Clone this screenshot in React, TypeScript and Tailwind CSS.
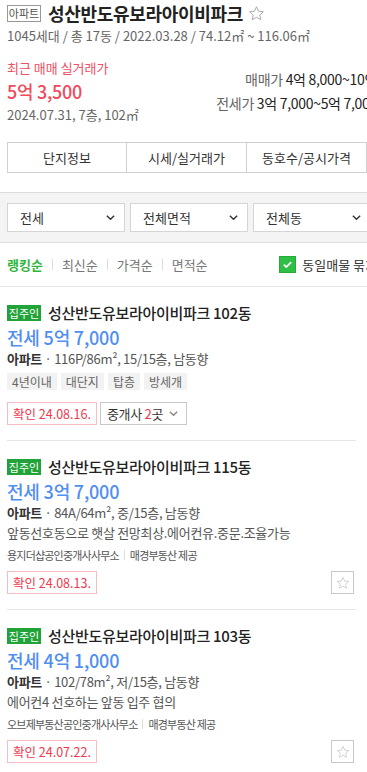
import React from 'react';

const FONT = "font-['Noto_Sans_CJK_KR',sans-serif]";

const StarIcon = ({ size, color }: { size: number; color: string }) => (
   <svg width={size} height={size} viewBox="0 0 24 24" fill="none" stroke={color} strokeWidth="1.4" strokeLinejoin="round">
      <path d="M12 2.5l2.9 6.3 6.8.7-5.1 4.6 1.5 6.8L12 17.4l-6.1 3.5 1.5-6.8-5.1-4.6 6.8-.7z" />
   </svg>
);

const Chevron = ({ size = 12, color = '#333' }: { size?: number; color?: string }) => (
   <svg width={size} height={size} viewBox="0 0 12 12" fill="none" stroke={color} strokeWidth="1.5">
      <path d="M2 4l4 4 4-4" />
   </svg>
);

interface Listing {
   dong: string;
   price: string;
   spec: string;
   tags?: string[];
   desc?: string;
   broker?: string;
   confirmed: string;
   agents?: number;
}

const listings: Listing[] = [
   {
      dong: '102동',
      price: '전세 5억 7,000',
      spec: '116P/86m², 15/15층, 남동향',
      tags: ['4년이내', '대단지', '탑층', '방세개'],
      confirmed: '24.08.16.',
      agents: 2,
   },
   {
      dong: '115동',
      price: '전세 3억 7,000',
      spec: '84A/64m², 중/15층, 남동향',
      desc: '앞동선호동으로 햇살 전망최상.에어컨유.중문.조율가능',
      broker: '용지더샵공인중개사사무소',
      confirmed: '24.08.13.',
   },
   {
      dong: '103동',
      price: '전세 4억 1,000',
      spec: '102/78m², 저/15층, 남동향',
      desc: '에어컨4 선호하는 앞동 입주 협의',
      broker: '오브제부동산공인중개사사무소',
      confirmed: '24.07.22.',
   },
];

const ListingItem: React.FC<{ item: Listing }> = ({ item }) => (
   <div className="ml-[7px] w-[349px] border-b border-[#e5e5e5] pt-[17px] pb-[15px]">
      <div className="flex items-center h-[17px]">
         <span className="h-[16px] w-[34px] bg-[#22a33a] text-white text-[11px] leading-[16px] text-center">집주인</span>
         <span className="ml-[7px] text-[15px] font-medium text-[#222] tracking-[-0.3px] leading-[17px]">
            성산반도유보라아이비파크 {item.dong}
         </span>
      </div>
      <div className="mt-[4px] leading-[24px] text-[18px] font-medium text-[#4f8ef2] tracking-[-0.2px]">{item.price}</div>
      <div className="leading-[20px] text-[13px] text-[#555] tracking-[-0.3px]">
         <span className="font-bold text-[#333]">아파트</span> · {item.spec}
      </div>
      {item.tags && (
         <div className="mt-[4px] flex gap-[4px]">
            {item.tags.map((t) => (
               <span key={t} className="h-[17px] px-[5px] bg-[#f2f2f2] text-[12px] leading-[17px] text-[#666]">
                  {t}
               </span>
            ))}
         </div>
      )}
      {item.desc && <div className="leading-[20px] text-[13px] text-[#555] tracking-[-0.3px]">{item.desc}</div>}
      {item.broker && (
         <div className="mt-[2px] flex items-center leading-[20px] text-[11px] text-[#555] tracking-[-0.8px] whitespace-nowrap">
            <span>{item.broker}</span>
            <span className="mx-[5px] h-[10px] w-px bg-[#ddd]" />
            <span>매경부동산 제공</span>
         </div>
      )}
      <div className={`${item.tags ? 'mt-[12px]' : 'mt-[6px]'} flex items-center justify-between pr-[2px]`}>
         <div className="flex gap-[3px]">
            <span className="h-[23px] px-[5px] border border-[#f8bcc3] text-[12.5px] leading-[21px] text-[#f0384e] whitespace-nowrap">
               확인 {item.confirmed}
            </span>
            {item.agents && (
               <span className="h-[23px] pl-[6px] pr-[7px] border border-[#c8c8c8] flex items-center gap-[5px] text-[13px] text-[#333] tracking-[-0.3px] whitespace-nowrap">
                  <span>
                     중개사 <span className="text-[#f0384e]">{item.agents}</span>곳
                  </span>
                  <Chevron size={11} color="#888" />
               </span>
            )}
         </div>
         {!item.agents && (
            <span className="h-[23px] w-[23px] border border-[#c8c8c8] flex items-center justify-center">
               <StarIcon size={14} color="#c8c8c8" />
            </span>
         )}
      </div>
   </div>
);

const Dropdown: React.FC<{ label: string }> = ({ label }) => (
   <div className="h-[29px] w-[118px] shrink-0 bg-white border border-[#d5d5d5] flex items-center justify-between pl-[12px] pr-[8px]">
      <span className="text-[13px] text-[#333]">{label}</span>
      <Chevron size={11} color="#333" />
   </div>
);

export default function App() {
   return (
      <div className={`w-[367px] overflow-hidden bg-white ${FONT}`}>
         <div className="w-[384px]">
            <div className="px-[7px]">
               <div className="pt-[3px] h-[23px] flex items-center">
                  <span className="h-[17px] w-[34px] border border-[#999] text-[11px] leading-[15px] text-center text-[#555]">아파트</span>
                  <span className="ml-[7px] text-[18px] font-bold text-[#222] tracking-[-0.3px] leading-[20px]">성산반도유보라아이비파크</span>
                  <span className="ml-[5px] flex">
                     <StarIcon size={17} color="#aaa" />
                  </span>
               </div>
               <div className="mt-[3px] leading-[20px] text-[13px] text-[#666]">
                  1045세대 / 총 17동 / 2022.03.28 / 74.12㎡ ~ 116.06㎡
               </div>
               <div className="mt-[12px] flex justify-between">
                  <div>
                     <div className="leading-[20px] text-[13px] text-[#f05064]">최근 매매 실거래가</div>
                     <div className="leading-[26px] text-[18px] font-medium text-[#f04a5c] tracking-[-0.3px]">5억 3,500</div>
                     <div className="mt-[1px] leading-[20px] text-[13px] text-[#666]">2024.07.31, 7층, 102㎡</div>
                  </div>
                  <div className="mt-[9px] text-right text-[14px] leading-[24px] tracking-[-0.3px]">
                     <div>
                        <span className="text-[#666]">매매가</span> <span className="text-[#222]">4억 8,000~10억</span>
                     </div>
                     <div>
                        <span className="text-[#666]">전세가</span> <span className="text-[#222]">3억 7,000~5억 7,000</span>
                     </div>
                  </div>
               </div>
               <div className="mt-[17px] flex">
                  {['단지정보', '시세/실거래가', '동호수/공시가격'].map((t, i) => (
                     <div
                        key={t}
                        className={`h-[31px] w-[120px] border-y border-r border-[#d0d0d0] ${i === 0 ? 'border-l' : ''} flex items-center justify-center text-[13px] text-[#333]`}
                     >
                        {t}
                     </div>
                  ))}
               </div>
            </div>

            <div className="mt-[19px] border-y border-[#dcdcdc] bg-[#f4f4f4] px-[7px] py-[10px] flex gap-[5px]">
               <Dropdown label="전세" />
               <Dropdown label="전체면적" />
               <Dropdown label="전체동" />
            </div>

            <div className="h-[44px] px-[7px] flex items-center justify-between border-b border-[#e5e5e5]">
               <div className="flex items-center text-[13px] text-[#777]">
                  <span className="font-bold text-[#2fb53c]">랭킹순</span>
                  <span className="mx-[9px] h-[11px] w-px bg-[#ddd]" />
                  <span>최신순</span>
                  <span className="mx-[9px] h-[11px] w-px bg-[#ddd]" />
                  <span>가격순</span>
                  <span className="mx-[9px] h-[11px] w-px bg-[#ddd]" />
                  <span>면적순</span>
               </div>
               <div className="flex items-center gap-[6px] text-[13px] text-[#333]">
                  <span className="h-[17px] w-[17px] bg-[#2fbf44] border border-[#27a83a] flex items-center justify-center">
                     <svg width="11" height="11" viewBox="0 0 12 12" fill="none" stroke="white" strokeWidth="2">
                        <path d="M2 6.2l2.7 2.6L10 3.4" />
                     </svg>
                  </span>
                  <span>동일매물 묶기</span>
               </div>
            </div>

            {listings.map((item) => (
               <ListingItem key={item.dong} item={item} />
            ))}
         </div>
      </div>
   );
}
